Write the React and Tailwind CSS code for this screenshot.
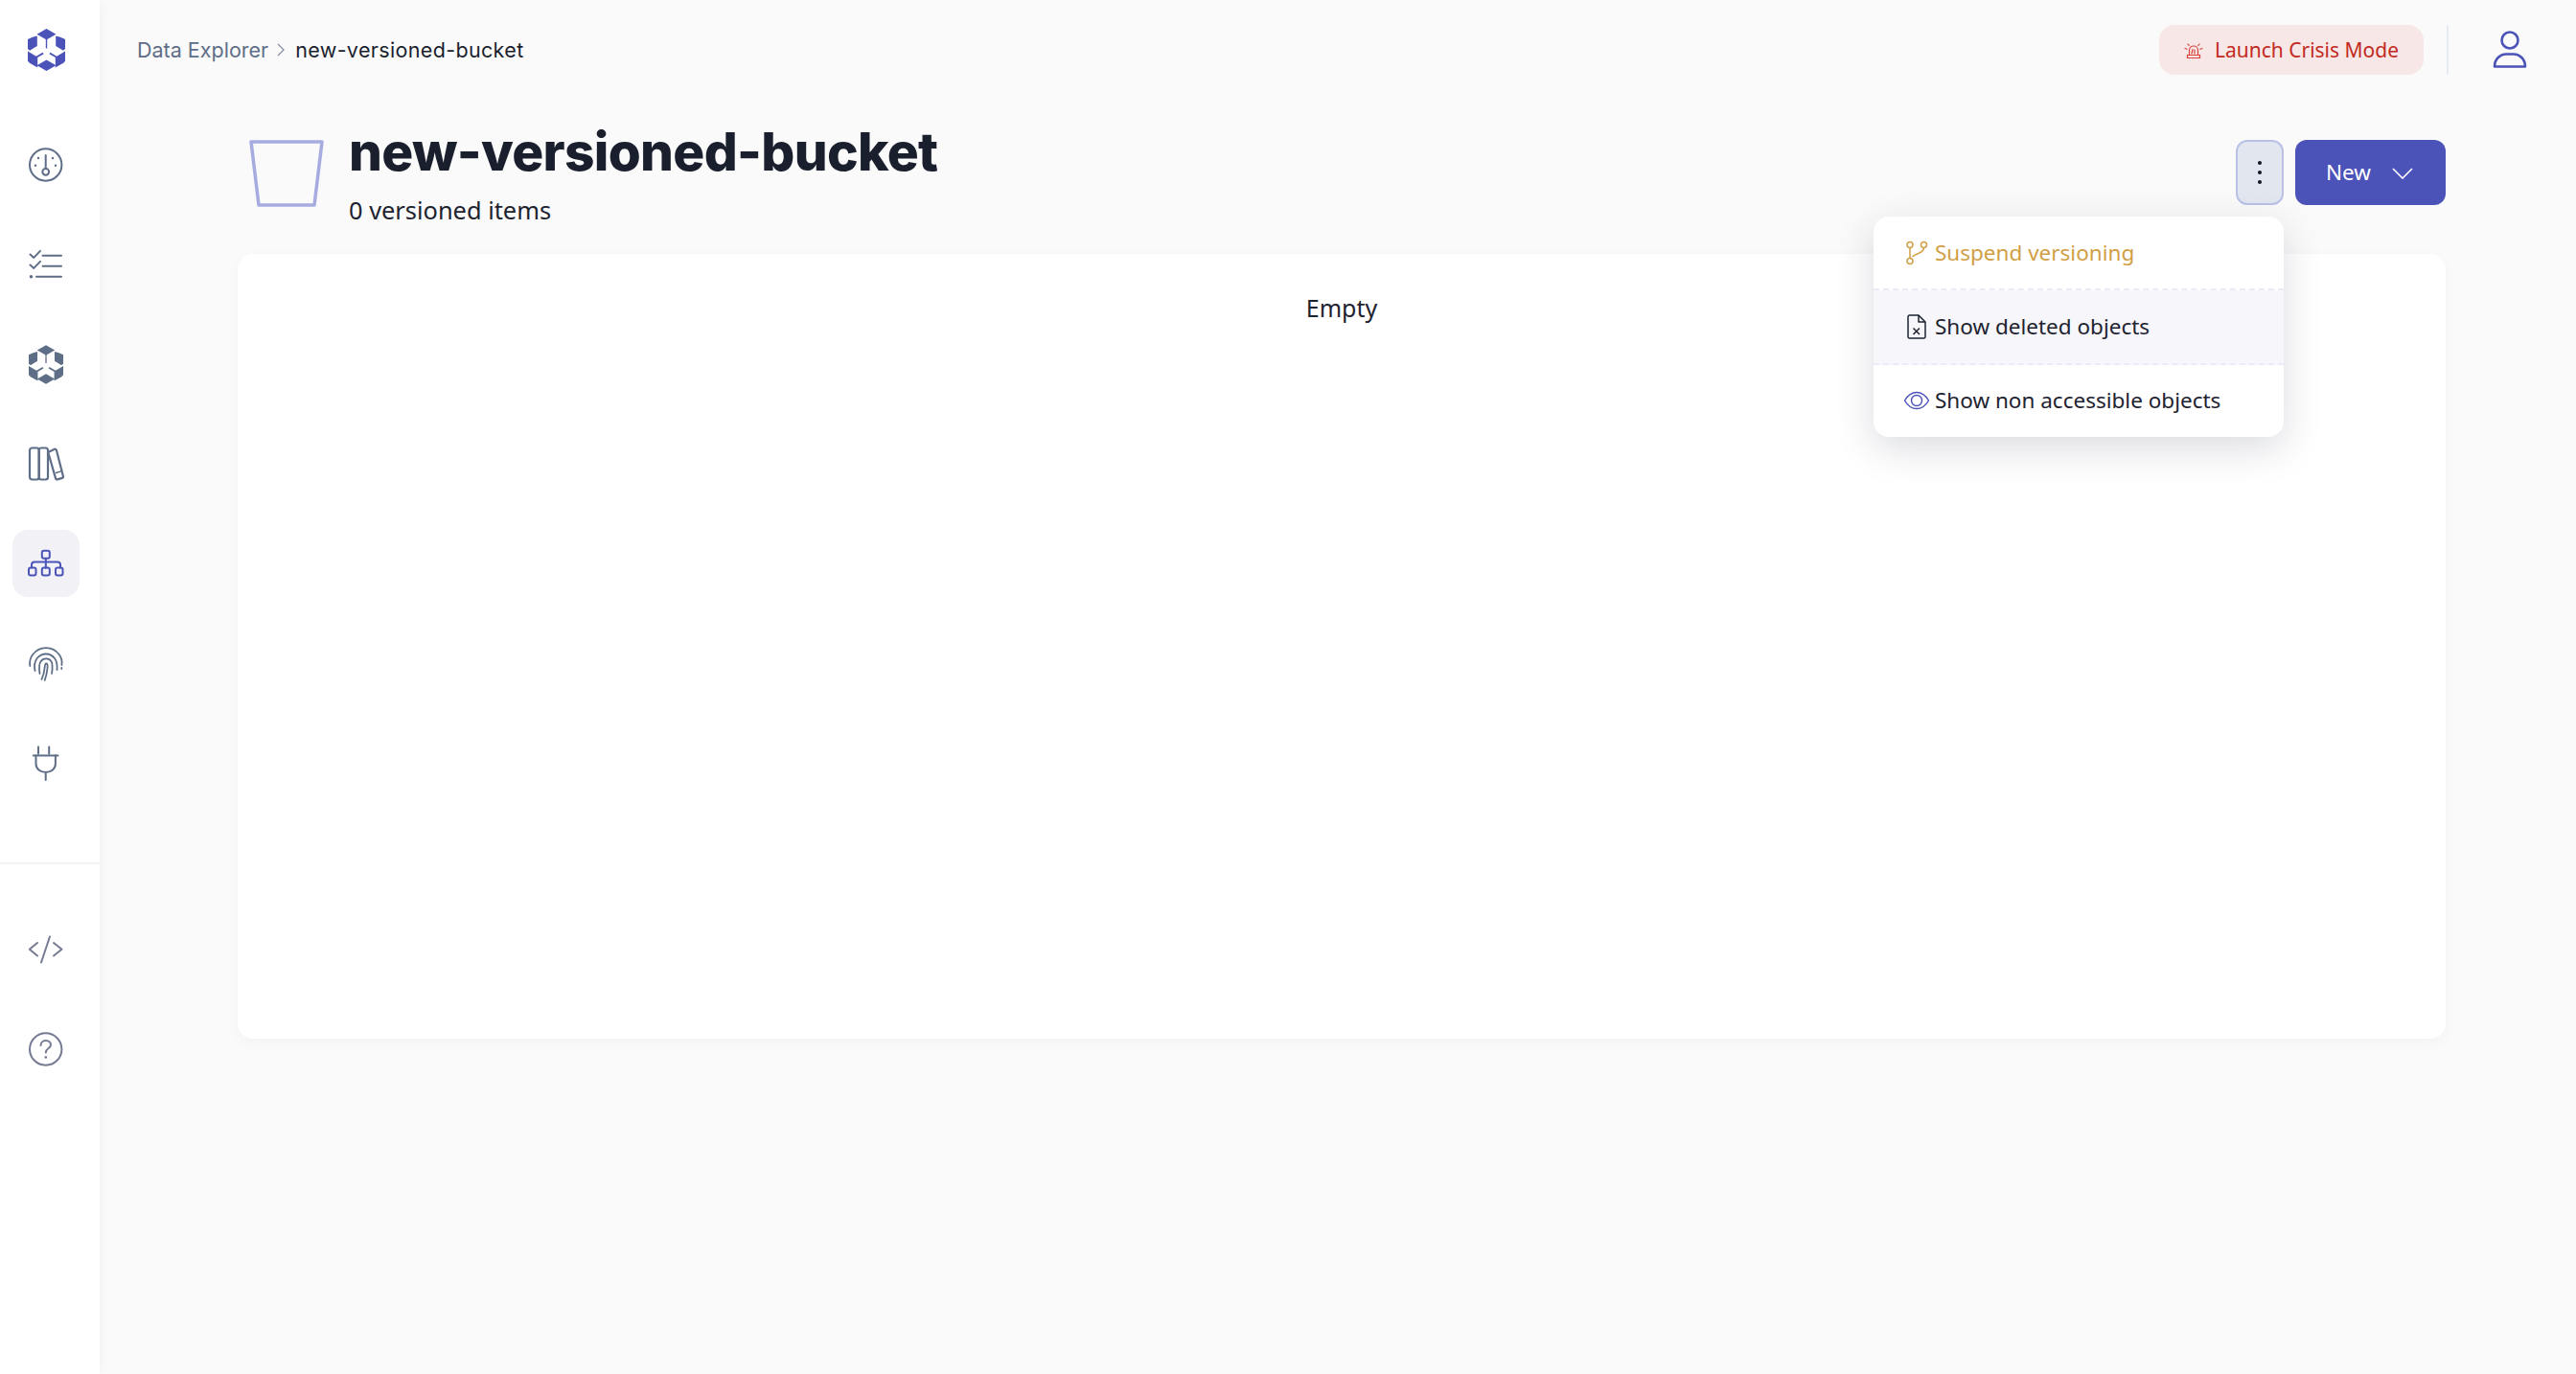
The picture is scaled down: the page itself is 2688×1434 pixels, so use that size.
import React from "react";

const G = "#5f6e87";
const B = "#4b53b8";
const noto = "font-['Noto_Sans','Open_Sans',sans-serif]";
const pop = "font-['Inter','Liberation_Sans',sans-serif]";

function Logo({ color, className }) {
  return (
    <svg viewBox="0 0 39 44" className={className} fill={color}>
      <path d="M19.500 0 29.500 5.800 19.500 11.500 9.500 5.800Z" />
      <path d="M18.800 10h1.400v10.500h-1.400z" />
      <path d="M9.800 8V18.500L2 23.300 0 21.500V11.500L5 9.200Z" transform="translate(0 -.5)" />
      <path d="M29.200 8V18.500L37 23.300 39 21.500V11.500L34 9.200Z" transform="translate(0 -.5)" />
      <path d="M0 23.500l8.800 5.200 6.700-3.900 1.200 1.400-6.500 3.800V40.500L1.500 35.500 0 33.500Z" />
      <path d="M39 23.500l-8.800 5.200-6.700-3.900-1.200 1.400 6.500 3.800V40.500l8.700-5 1.500-2Z" />
      <path d="M19.500 32.500 29.500 38.300 19.500 44 9.500 38.300Z" />
    </svg>
  );
}

const ic = "w-10 h-10";
const S = ({ children, color = G, w = 2 }) => (
  <svg viewBox="0 0 40 40" className={ic} fill="none" stroke={color} strokeWidth={w} strokeLinecap="round" strokeLinejoin="round">
    {children}
  </svg>
);

const Gauge = () => (
  <S>
    <circle cx="19.7" cy="20" r="16.7" />
    <path d="M19.7 10v13" />
    <circle cx="19.7" cy="27.3" r="3.4" />
    <g fill={G} stroke="none">
      <circle cx="12" cy="13" r="1.2" />
      <circle cx="27" cy="13" r="1.2" />
      <circle cx="9" cy="20.7" r="1.2" />
      <circle cx="30" cy="20.7" r="1.2" />
    </g>
  </S>
);
const Tasks = () => (
  <S>
    <path d="M3.5 9.5l3.8 3.4 6.7-7" />
    <path d="M3.5 20.5l3.8 3.4 6.7-7" />
    <path d="M16.5 10.7H36M16.5 21.7H36M10 32.7H36" />
    <circle cx="4.5" cy="32.7" r="1.8" fill={G} stroke="none" />
  </S>
);
const Books = () => (
  <S w={2.2}>
    <rect x="3" y="3.500" width="9.700" height="33" rx="2.500" />
    <rect x="12.700" y="3.500" width="9.300" height="33" rx="2.500" />
    <path d="M22.200 8 29 4.800a1.500 1.500 0 0 1 1.900 1l7 27.300a1.500 1.500 0 0 1-1 1.800L32 36.400a1.500 1.500 0 0 1-1.900-1Z" />
    <path d="M30.500 29.500l6-1.800" strokeWidth="1.400" />
  </S>
);
const Org = () => (
  <S color={B}>
    <rect x="15.800" y="6.800" width="8" height="8" rx="2" />
    <path d="M19.800 14.800v10M19.800 18.400H8a3 3 0 0 0-3 3v3M19.800 18.400H32a3 3 0 0 1 3 3v3" />
    <rect x="2" y="24.500" width="7.500" height="8" rx="2" />
    <rect x="15.800" y="24.500" width="8" height="8" rx="2" />
    <rect x="30" y="24.500" width="7.500" height="8" rx="2" />
  </S>
);
const Finger = () => (
  <S w={1.800}>
    <path d="M3.300 23c-.6-4-.2-8 2.800-11.800C9.200 7.300 14 4.200 20 4.200c6 0 10.800 3.100 13.800 7 3 3.900 3.100 7.800 2.600 10.800M36.300 25v1" />
    <path d="M8.500 28c-1-5-.5-9.500 2.200-13 2.400-2.800 5.800-4.500 9.300-4.500 3.500 0 6.800 1.800 9.100 4.700 2 2.600 2.900 6.500 2.400 12" />
    <path d="M13.500 31c-.7-4.500-1-9.500.9-12.600 1.300-2 3.700-3 5.800-3 2.300 0 4.300 1.200 5.400 3 1.400 2.400 1.200 7 .5 12.600" />
    <path d="M15.500 37c1.800-4 2.800-8 3.100-12 .2-2.500.5-4.500 1.700-4.500 1.300 0 1.500 2 1.200 5-.4 4-1.400 8.500-2.800 12.500" />
  </S>
);
const Plug = () => (
  <S>
    <path d="M6.800 12.500H32.500M12 3.500v7M23.200 3.500v7" />
    <path d="M9.500 12.500v8.500c0 5.500 4.300 9 10.200 9s10.200-3.500 10.200-9v-8.500M19.700 30v8" />
  </S>
);
const Code = () => (
  <S color="#757b92">
    <path d="M11 7.500 2.800 14.200 11 21M24 1 15 28M28 7.500 36.500 14.200 28 21" transform="translate(0 5.500)" />
  </S>
);
const Help = () => (
  <S color="#757b92">
    <circle cx="19.700" cy="20" r="16.700" />
    <path d="M14.500 16c0-3 2.300-5 5.300-5s5.200 2 5.200 4.500c0 3.700-5.200 3.500-5.200 8" />
    <circle cx="19.800" cy="28.400" r="1.300" fill="#757b92" stroke="none" />
  </S>
);

function NavItem({ active, children, className = "" }) {
  return (
    <div className={`ml-[13px] w-[70px] h-[70px] rounded-2xl flex items-center justify-center ${active ? "bg-[#f2f2f6]" : ""} ${className}`}>
      {children}
    </div>
  );
}

function Sidebar() {
  return (
    <aside className="w-[104px] shrink-0 bg-white shadow-[0_0_12px_rgba(0,0,0,0.04)] flex flex-col z-10">
      <div className="h-[104px] flex items-center justify-center shrink-0">
        <Logo color={B} className="w-[39px] h-[44px] ml-[-7px]" />
      </div>
      <div className="flex flex-col gap-[34px] pt-[33px] h-[796px]">
        <NavItem><Gauge /></NavItem>
        <NavItem><Tasks /></NavItem>
        <NavItem><Logo color={G} className="w-[36px] h-[41px]" /></NavItem>
        <NavItem><Books /></NavItem>
        <NavItem active><Org /></NavItem>
        <NavItem><Finger /></NavItem>
        <NavItem><Plug /></NavItem>
      </div>
      <div className="h-[2px] bg-[#f3f3f5]" />
      <div className="flex flex-col gap-[34px] pt-[54px]">
        <NavItem><Code /></NavItem>
        <NavItem><Help /></NavItem>
      </div>
    </aside>
  );
}

function Header() {
  return (
    <header className="h-[104px] flex items-center pl-[39px] pr-[5px]">
      <div className={`flex items-center flex-1 text-[21.500px] ${pop}`}>
        <span className="text-[#5f6e87]">Data Explorer</span>
        <svg viewBox="0 0 10 16" className="w-[10px] h-[16px] ml-[8px] mr-[10px]" fill="none" stroke="#8792a6" strokeWidth="1.300"><path d="M2 2l6 6-6 6" /></svg>
        <span className="text-[#1a1f2e] tracking-[0.35px]">new-versioned-bucket</span>
      </div>
      <button className={`w-[276px] h-[52px] rounded-2xl bg-[#f8e7e7] text-[#c22a22] text-[21px] flex items-center justify-center gap-[12px] pt-[1px] ${noto}`}>
        <svg viewBox="0 0 20 20" className="w-[20px] h-[20px]" fill="none" stroke="#d9403a" strokeWidth="1.200" strokeLinecap="round">
          <path d="M5.500 14V9.500a4.500 4.500 0 0 1 9 0V14M3.500 14.500h13v3h-13zM9 8.500 8 13M11 9v4" />
          <path d="M1 7.500l2 .8M19 7.500l-2 .8M4 3l1.200 1.500M16 3l-1.200 1.500" />
        </svg>
        Launch Crisis Mode
      </button>
      <div className="w-[2px] h-[52px] bg-[#e6ebf3] ml-[24px]" />
      <div className="w-[128px] flex items-center justify-center">
        <svg viewBox="0 0 36 42" className="w-[36px] h-[42px]" fill="none" stroke={B} strokeWidth="2.600" strokeLinejoin="round">
          <circle cx="18" cy="11" r="8.500" />
          <path d="M2 38.500c0-8 6-13 12-13h8c6 0 12 5 12 13Z" />
        </svg>
      </div>
    </header>
  );
}

function MenuItem({ icon, text, color, hover }) {
  return (
    <div className={`flex-1 flex items-center pl-[32px] gap-[6px] text-[22.500px] ${color} ${hover ? "bg-[#f6f6fb]" : ""}`}>
      <span className="w-[26px] h-[26px] flex items-center justify-center shrink-0">{icon}</span>
      {text}
    </div>
  );
}

function Dropdown() {
  return (
    <div className={`absolute right-0 top-[80px] w-[428px] h-[230px] bg-white rounded-2xl overflow-hidden shadow-[0_12px_40px_rgba(30,35,60,0.16)] flex flex-col divide-y-2 divide-dashed divide-[#ebebf7] z-20 ${noto}`}>
      <MenuItem
        color="text-[#d19f45]"
        text="Suspend versioning"
        icon={
          <svg viewBox="0 0 26 26" className="w-[26px] h-[26px]" fill="none" stroke="#d19f45" strokeWidth="1.500">
            <circle cx="6" cy="4.500" r="3" /><circle cx="20.500" cy="4.500" r="3" /><circle cx="6" cy="21.500" r="3" />
            <path d="M6 7.500v11M20.500 7.500c0 6-8 5.500-12 9.500" />
          </svg>
        }
      />
      <MenuItem
        hover
        color="text-[#1e2330]"
        text="Show deleted objects"
        icon={
          <svg viewBox="0 0 26 26" className="w-[26px] h-[26px]" fill="none" stroke="#1e2330" strokeWidth="1.500" strokeLinejoin="round">
            <path d="M15 1H5.500A1.500 1.500 0 0 0 4 2.500v21A1.500 1.500 0 0 0 5.500 25h15a1.500 1.500 0 0 0 1.500-1.500V8Z" />
            <path d="M15 1v7h7M9.500 14.500l6.500 6.500M16 14.500l-6.500 6.500" />
          </svg>
        }
      />
      <MenuItem
        color="text-[#1e2330]"
        text="Show non accessible objects"
        icon={
          <svg viewBox="0 0 26 26" className="w-[26px] h-[26px]" fill="none" stroke={B} strokeWidth="1.400">
            <path d="M.500 13C3.500 8 8 4.500 13 4.500S22.500 8 25.500 13C22.500 18 18 21.500 13 21.500S3.500 18 .500 13Z" />
            <circle cx="13" cy="13" r="5.500" />
          </svg>
        }
      />
    </div>
  );
}

export default function App() {
  return (
    <div className="flex h-[1434px] w-[2688px] bg-[#fafafa] overflow-hidden">
      <Sidebar />
      <main className="flex-1 flex flex-col">
        <Header />
        <div className="pl-[144px] pr-[136px]">
          <div className="h-[161px] flex items-start relative">
            <svg viewBox="0 0 78 72" className="w-[78px] h-[72px] ml-[12px] mt-[41px]" fill="none" stroke="#a6abe0" strokeWidth="3.500" strokeLinejoin="round">
              <path d="M2 3H76L68 69H10Z" />
            </svg>
            <div className="ml-[26px] flex-1 mt-[18px]">
              <h1 className={`text-[55px] leading-[72px] font-extrabold tracking-[-0.68px] text-[#1a1f2e] ${pop}`}>new-versioned-bucket</h1>
              <p className={`mt-[7px] text-[25.400px] leading-[36px] text-[#1e2330] ${noto}`}>0 versioned items</p>
            </div>
            <div className="flex gap-[12px] mt-[42px] relative">
              <button className="w-[50px] h-[68px] rounded-xl border-2 border-[#b9c2e6] bg-[#e2e6ef] flex flex-col items-center justify-center gap-[6px]">
                <span className="w-[4px] h-[4px] rounded-full bg-[#0f1420]" />
                <span className="w-[4px] h-[4px] rounded-full bg-[#0f1420]" />
                <span className="w-[4px] h-[4px] rounded-full bg-[#0f1420]" />
              </button>
              <button className={`w-[157px] h-[68px] rounded-xl bg-[#4b52b8] text-white text-[22.500px] flex items-center pl-[32px] ${noto}`}>
                New
                <svg viewBox="0 0 22 12" className="w-[22px] h-[12px] ml-[22px] mt-[2px]" fill="none" stroke="#fff" strokeWidth="1.600"><path d="M1 1l10 10L21 1" /></svg>
              </button>
              <div className="absolute right-[169px] top-0 w-0 h-0">
                <Dropdown />
              </div>
            </div>
          </div>
          <section className={`h-[819px] rounded-2xl bg-white shadow-[0_4px_16px_rgba(0,0,0,0.03)] pt-[36px] text-center text-[25px] leading-[40px] text-[#1e2330] ${noto}`}>
            Empty
          </section>
        </div>
      </main>
    </div>
  );
}
